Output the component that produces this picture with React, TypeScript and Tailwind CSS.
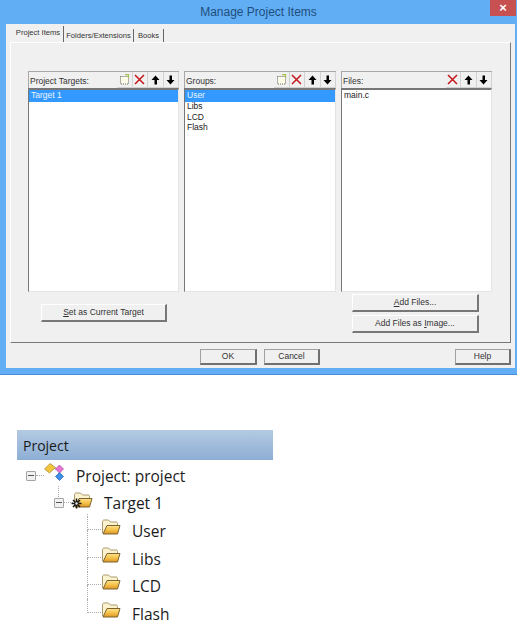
import type { ReactNode } from "react";

const dialogFont = { fontFamily: '"Liberation Sans", Arial, sans-serif' };
const treeFont = { fontFamily: '"Open Sans", "Noto Sans", sans-serif' };

function NewIcon() {
    return (
        <svg width="11" height="11" viewBox="0 0 11 11">
            <rect x="1.5" y="2.5" width="8" height="7.5" fill="#fbfbe8" stroke="#666" strokeDasharray="1 1" />
            <path d="M6 0.5h3.5v3" fill="none" stroke="#a9c450" strokeWidth="1.4" />
        </svg>
    );
}

function DeleteIcon() {
    return (
        <svg width="11" height="11" viewBox="0 0 11 11">
            <path d="M1 1l9 9M10 1l-9 9" stroke="#c4161c" strokeWidth="1.500" />
        </svg>
    );
}

function UpIcon() {
    return (
        <svg width="9" height="10" viewBox="0 0 9 10">
            <path d="M4.5 0.5L8.5 5H6v4.500H3.500V5H0.500z" fill="#000" />
        </svg>
    );
}

function DownIcon() {
    return (
        <svg width="9" height="10" viewBox="0 0 9 10">
            <path d="M3.500 0.500H6V5h2.500l-4 4.500L0.500 5h3z" fill="#000" />
        </svg>
    );
}

function ToolCell({ children }: { children: ReactNode }) {
    return (
        <div className="flex h-[15px] w-[15.5px] items-center justify-center border-r border-[#d2d2d2]">
            {children}
        </div>
    );
}

function Panel({ title, tools, items, width }: { title: string; tools: ReactNode[]; items: string[]; width: string }) {
    return (
        <div className={`flex flex-col ${width}`}>
            <div className="flex h-[17px] items-center justify-between border-t border-l border-[#a8a8a8] pl-[1px]">
                <span className="pt-[3px] text-[8.5px] text-[#333]">{title}</span>
                <div className="flex border-b border-[#d2d2d2]">
                    {tools.map((t, i) => (
                        <ToolCell key={i}>{t}</ToolCell>
                    ))}
                </div>
            </div>
            <div className="flex h-[204px] flex-col border-t-2 border-l border-[#777] border-r border-b border-r-[#e4e4e4] border-b-[#e4e4e4] bg-white">
                {items.map((item, i) => (
                    <div
                        key={item}
                        className={`flex h-[10.5px] items-center pl-[2px] text-[8.5px] first:h-[11.5px] ${
                            i === 0 && title !== "Files:" ? "bg-[#3399ff] text-[#eaf4ff]" : "text-[#222]"
                        }`}
                    >
                        {item}
                    </div>
                ))}
            </div>
        </div>
    );
}

function RaisedButton({ children, width }: { children: ReactNode; width: string }) {
    return (
        <div className={`flex ${width} h-[18px] items-center justify-center border-t border-l border-t-white border-l-white border-r-2 border-b-2 border-r-[#777] border-b-[#777] bg-[#f0f0f0] text-[8.5px] text-[#333]`}>
            {children}
        </div>
    );
}

function FooterButton({ children, width }: { children: ReactNode; width: string }) {
    return (
        <div className={`flex ${width} h-[16px] items-center justify-center border-t border-l border-t-[#a0a0a0] border-l-[#a0a0a0] border-r-2 border-b-2 border-r-[#707070] border-b-[#707070] bg-[#f0f0f0] text-[8.5px] text-[#333]`}>
            {children}
        </div>
    );
}

function Folder() {
    return (
        <svg width="20" height="17" viewBox="0 0 20 17" className="mb-[5px] shrink-0">
            <defs>
                <linearGradient id="folderFront" x1="0" y1="0" x2="0" y2="1">
                    <stop offset="0" stopColor="#fde48f" />
                    <stop offset="0.55" stopColor="#f5bf45" />
                    <stop offset="1" stopColor="#d9942a" />
                </linearGradient>
            </defs>
            <path d="M1.500 14V3C1.500 2 2 1 3 1h4.500l2 2H15c1 0 1.500.5 1.500 1.500V7" fill="#fbf3d0" stroke="#ab9a6c" strokeWidth="1" />
            <path d="M6 6.500h13l-2.500 8.500H2z" fill="url(#folderFront)" stroke="#7d642e" strokeWidth="1" />
        </svg>
    );
}

function Minus() {
    return (
        <div className="flex h-[10px] w-[10px] shrink-0 items-center justify-center rounded-[1px] border border-[#a5a5a5] bg-[#f1f1f1]">
            <div className="h-[1px] w-[6px] bg-[#555]" />
        </div>
    );
}

function ProjectGlyph() {
    return (
        <svg width="21" height="19" viewBox="0 0 21 19" className="mb-[7px] shrink-0">
            <path d="M14 6h-3M15.500 9.500v1" stroke="#888" strokeWidth="0.9" fill="none" />
            <path d="M0.500 6L6 0.500L11.500 4.500L5.500 10z" fill="#f3c53f" stroke="#a5852a" strokeWidth="0.7" />
            <path d="M11.500 6L15.500 2L19.500 6L15.500 10z" fill="#e873d2" stroke="#a84a98" strokeWidth="0.7" />
            <path d="M11.500 13.500L15.500 9.500L19.500 13.500L15.500 17.500z" fill="#3f8fe8" stroke="#2a66b3" strokeWidth="0.7" />
        </svg>
    );
}

function Gear() {
    return (
        <svg width="11" height="11" viewBox="0 0 11 11">
            <path d="M5.500 0.500v10M0.500 5.500h10M2 2l7 7M9 2l-7 7" stroke="#151515" strokeWidth="1.500" />
            <circle cx="5.500" cy="5.500" r="1.200" fill="#eee" />
        </svg>
    );
}

function GroupRow({ name, last }: { name: string; last?: boolean }) {
    return (
        <div className="flex h-[27.5px] items-center">
            <div className="flex h-full w-[14px] shrink-0 flex-col">
                <div className="h-1/2 border-b border-l border-dotted border-[#aaa]" />
                {!last && <div className="h-1/2 border-l border-dotted border-[#aaa]" />}
            </div>
            <Folder />
            <span className="ml-[11px] pt-[3px] text-[15.5px] text-[#1c1c1c]">{name}</span>
        </div>
    );
}

export default function App() {
    const fullTools = [<NewIcon key="n" />, <DeleteIcon key="d" />, <UpIcon key="u" />, <DownIcon key="w" />];
    const fileTools = [<DeleteIcon key="d" />, <UpIcon key="u" />, <DownIcon key="w" />];

    return (
        <div className="h-[625px] w-[517px] bg-white">
            {/* dialog */}
            <div className="flex h-[375px] flex-col border-b border-[#4a8fd6] bg-[#62aef5]" style={dialogFont}>
                <div className="relative flex h-[24px] shrink-0 items-center justify-center">
                    <span className="text-[12px] text-[#1e4f7c]">Manage Project Items</span>
                    <div className="absolute top-0 right-[1px] flex h-[16px] w-[26px] items-center justify-center bg-[#c75050] text-[13px] font-bold text-white">
                        ×
                    </div>
                </div>

                <div className="ml-[6px] mr-[2px] flex h-[344px] flex-col bg-[#f0f0f0] pl-[4px] pr-[4px]">
                    {/* tabs */}
                    <div className="flex h-[18px] items-end whitespace-nowrap pl-[3px] text-[7.6px] text-[#333]">
                        <div className="flex h-[16px] w-[51px] items-center justify-center border-r border-[#666] pb-[2px]">Project Items</div>
                        <div className="flex h-[13px] w-[70px] items-center justify-center border-r border-[#666]">Folders/Extensions</div>
                        <div className="flex h-[13px] w-[30px] items-center justify-center border-r border-[#666]">Books</div>
                    </div>

                    <div className="flex h-[301px] flex-col border-t border-l border-white border-r border-b border-r-[#777] border-b-[#777] pt-[28px] pl-[17px]">
                        <div className="flex gap-[5px]">
                            <Panel title="Project Targets:" tools={fullTools} items={["Target 1"]} width="w-[151px]" />
                            <Panel title="Groups:" tools={fullTools} items={["User", "Libs", "LCD", "Flash"]} width="w-[152px]" />
                            <Panel title="Files:" tools={fileTools} items={["main.c"]} width="w-[151px]" />
                        </div>
                        <div className="flex justify-between pr-[31px]">
                            <div className="ml-[13px] mt-[12px]">
                                <RaisedButton width="w-[126px]">
                                    <span><u>S</u>et as Current Target</span>
                                </RaisedButton>
                            </div>
                            <div className="mt-[2px] flex flex-col gap-[3px]">
                                <RaisedButton width="w-[127px]">
                                    <span><u>A</u>dd Files...</span>
                                </RaisedButton>
                                <RaisedButton width="w-[127px]">
                                    <span>Add Files as <u>I</u>mage...</span>
                                </RaisedButton>
                            </div>
                        </div>
                    </div>

                    <div className="mt-[6px] flex items-start justify-between pl-[190px]">
                        <div className="flex gap-[7px]">
                            <FooterButton width="w-[57px]">OK</FooterButton>
                            <FooterButton width="w-[56px]">Cancel</FooterButton>
                        </div>
                        <FooterButton width="w-[56px]">Help</FooterButton>
                    </div>
                </div>
            </div>

            {/* project tree */}
            <div className="ml-[17px] mt-[55px] w-[256px]" style={treeFont}>
                <div className="flex h-[30px] items-center bg-gradient-to-b from-[#b4cae2] to-[#8daed4] pl-[6px] text-[14px] text-[#1a1a1a]">
                    Project
                </div>
                <div className="flex h-[29px] items-center pl-[9px] pt-[2px]">
                    <Minus />
                    <div className="w-[8px] border-b border-dotted border-[#aaa]" />
                    <ProjectGlyph />
                    <span className="ml-[11px] pt-[2px] text-[15.5px] text-[#1c1c1c]">Project: project</span>
                </div>
                <div className="flex h-[27.5px] items-center pl-[37px]">
                    <div className="relative">
                        {/* connector tick up to the project node */}
                        <div className="absolute left-[4px] top-[-12px] h-[11px] border-l border-dotted border-[#aaa]" />
                        <Minus />
                    </div>
                    <div className="w-[9px] border-b border-dotted border-[#aaa]" />
                    <div className="relative flex items-center">
                        <Folder />
                        <div className="absolute bottom-[5px] left-[-2px] flex">
                            <Gear />
                        </div>
                    </div>
                    <span className="ml-[11px] pt-[2px] text-[15.5px] text-[#1c1c1c]">Target 1</span>
                </div>
                <div className="relative pl-[70px]">
                    {/* trunk starts just under the target folder */}
                    <div className="absolute left-[70px] top-[-3px] h-[3px] border-l border-dotted border-[#aaa]" />
                    <GroupRow name="User" />
                    <GroupRow name="Libs" />
                    <GroupRow name="LCD" />
                    <GroupRow name="Flash" last />
                </div>
            </div>
        </div>
    );
}
